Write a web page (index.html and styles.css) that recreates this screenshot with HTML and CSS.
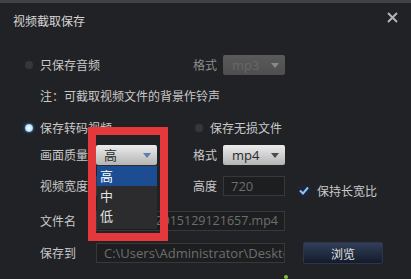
FILE: index.html
```html
<!DOCTYPE html>
<html lang="zh-CN">
<head>
    <meta charset="UTF-8">
    <meta name="viewport" content="width=device-width, initial-scale=1.0">
    <title>视频截取保存</title>
    <link rel="stylesheet" href="styles.css">
</head>
<body>
    <div class="topline"></div>
    <div class="titlebar">
        <span class="title">视频截取保存</span>
        <svg class="close" width="11" height="11" viewBox="0 0 11 11">
            <path d="M1 1 L10 10 M10 1 L1 10" stroke="#b4b4b4" stroke-width="2"/>
        </svg>
    </div>

    <div class="form">
        <div class="row row-audio">
            <label class="opt opt-audio"><span class="radio"></span>只保存音频</label>
            <span class="flabel dim">格式</span>
            <div class="select fmt disabled"><span>mp3</span><i class="arrow"></i></div>
        </div>

        <div class="row note">注：可截取视频文件的背景作铃声</div>

        <div class="row row-video">
            <label class="opt opt-video"><span class="radio on"></span>保存转码视频</label>
            <label class="opt"><span class="radio"></span>保存无损文件</label>
        </div>

        <div class="row field row-quality">
            <span class="lbl">画面质量</span>
            <div class="select quality">
                <span>高</span><i class="arrow blue"></i>
                <ul class="dropdown">
                    <li class="active">高</li>
                    <li>中</li>
                    <li>低</li>
                </ul>
                <div class="mark"></div>
            </div>
            <span class="flabel">格式</span>
            <div class="select fmt"><span>mp4</span><i class="arrow"></i></div>
        </div>

        <div class="row field row-size">
            <span class="lbl">视频宽度</span>
            <div class="input small"></div>
            <span class="flabel">高度</span>
            <div class="input fmt-w">720</div>
            <label class="check"><span class="box"><svg width="10" height="9" viewBox="0 0 10 9"><path d="M1 4.5 L4 7.5 L9 1.5" fill="none" stroke="#8ec3f2" stroke-width="2"/></svg></span>保持长宽比</label>
        </div>

        <div class="row field row-name">
            <span class="lbl">文件名</span>
            <div class="input wide filename">2015129121657.mp4</div>
        </div>

        <div class="row field row-path">
            <span class="lbl">保存到</span>
            <div class="input wide">C:\Users\Administrator\Desktop</div>
            <button class="browse">浏览</button>
        </div>

        <div class="row-tail"><span class="dot"></span></div>
    </div>
</body>
</html>
```

FILE: styles.css
```css
body {
    margin: 0;
    height: 279px;
    background: #212225;
    color: #c9c9c9;
    font-family: "Noto Sans CJK SC", "Noto Sans", sans-serif;
    font-size: 12px;
    overflow: hidden;
}

.topline {
    height: 3px;
    background: #404246;
}
.titlebar {
    height: 39px;
    display: flex;
    align-items: center;
    justify-content: space-between;
    padding: 0 13px 3px 13px;
    box-sizing: border-box;
}
.title {
    color: #d6d6d6;
    line-height: 16px;
}
.close {
    margin-bottom: 7px;
}

/* form rows */
.row {
    display: flex;
    align-items: center;
    height: 20px;
    line-height: 20px;
    white-space: nowrap;
}
.row-audio { margin-top: 13px; padding-left: 25px; }
.note { margin-top: 11px; padding-left: 40px; }
.row-video { margin-top: 12px; padding-left: 25px; }
.row-quality { margin-top: 7px; }
.row-size { margin-top: 11px; }
.row-name { margin-top: 15px; }
.row-path { margin-top: 12px; }
.row-tail {
    display: flex;
    height: 4px;
    margin-top: 12px;
    padding-left: 284px;
}

.field { padding-left: 40px; }
.lbl { width: 56px; }
.flabel { width: 30px; }
.dim { color: #8c8c8c; }

.opt {
    display: flex;
    align-items: center;
}
.opt-audio { width: 168px; }
.opt-video { width: 170px; }

.radio {
    width: 8px;
    height: 8px;
    border-radius: 50%;
    background: #36373a;
    margin-right: 7px;
}
.radio.on {
    background: radial-gradient(circle, #ffffff 0%, #cfe9ff 45%, #4aa6f0 100%);
    box-shadow: 0 0 3px #2f8fe0;
}

/* selects */
.select {
    position: relative;
    height: 20px;
    box-sizing: border-box;
    border-radius: 2px;
    background: linear-gradient(#ececec, #b4b4b4);
    color: #2a2a2a;
    display: flex;
    align-items: center;
    justify-content: space-between;
    padding: 0 6px 0 9px;
    font-family: "Open Sans", "Noto Sans CJK SC", sans-serif;
    font-size: 13px;
}
.select.quality {
    width: 61px;
    margin-right: 36px;
    padding-left: 8px;
    font-family: "Noto Sans CJK SC", sans-serif;
}
.select.fmt { width: 62px; }
.select.disabled {
    background: linear-gradient(#5a5a5a, #4e4e4e);
    color: #676767;
}
.arrow {
    width: 0;
    height: 0;
    border-left: 4px solid transparent;
    border-right: 4px solid transparent;
    border-top: 5px solid #4a4a4a;
}
.arrow.blue { border-top-color: #5d7fae; }
.disabled .arrow { border-top-color: #8a8a8a; }

.dropdown {
    position: absolute;
    top: 20px;
    left: 1px;
    width: 60px;
    height: 64px;
    margin: 0;
    padding: 1px 0 0 0;
    box-sizing: border-box;
    list-style: none;
    background: #2c2c2e;
    color: #e2e2e2;
    font-size: 13px;
    z-index: 2;
}
.dropdown li {
    height: 20px;
    line-height: 20px;
    padding-left: 3px;
}
.dropdown li.active {
    background: #1c4c91;
    color: #ffffff;
}

/* red annotation frame */
.mark {
    position: absolute;
    left: -8px;
    top: -18px;
    width: 80px;
    height: 114px;
    box-sizing: border-box;
    border: 8px solid #e5383d;
    z-index: 3;
}

/* inputs */
.input {
    height: 20px;
    box-sizing: border-box;
    background: #1d1e20;
    border: 1px solid #36383b;
    color: #6e6e6e;
    font-family: "Open Sans", "Noto Sans CJK SC", sans-serif;
    font-size: 13px;
    line-height: 18px;
    padding-left: 7px;
    overflow: hidden;
}
.input.small { width: 61px; margin-right: 36px; }
.input.fmt-w { width: 62px; }
.input.wide { width: 189px; }
.input.filename {
    font-size: 12.5px;
    text-align: right;
    padding-right: 6px;
}

.check {
    display: flex;
    align-items: center;
    margin-left: 13px;
    margin-top: 9px;
}
.check .box {
    width: 12px;
    height: 11px;
    background: #1b2535;
    display: flex;
    align-items: center;
    justify-content: center;
    margin-right: 7px;
}

.browse {
    margin-left: 18px;
    width: 80px;
    height: 22px;
    border: 1px solid #2d3648;
    border-radius: 2px;
    background: linear-gradient(#323f58, #131b2c);
    color: #e2e2e2;
    font-family: "Noto Sans CJK SC", sans-serif;
    font-size: 12px;
    padding: 0;
}

.dot {
    width: 4px;
    height: 4px;
    border-radius: 50%;
    background: #7fc13a;
}
```
